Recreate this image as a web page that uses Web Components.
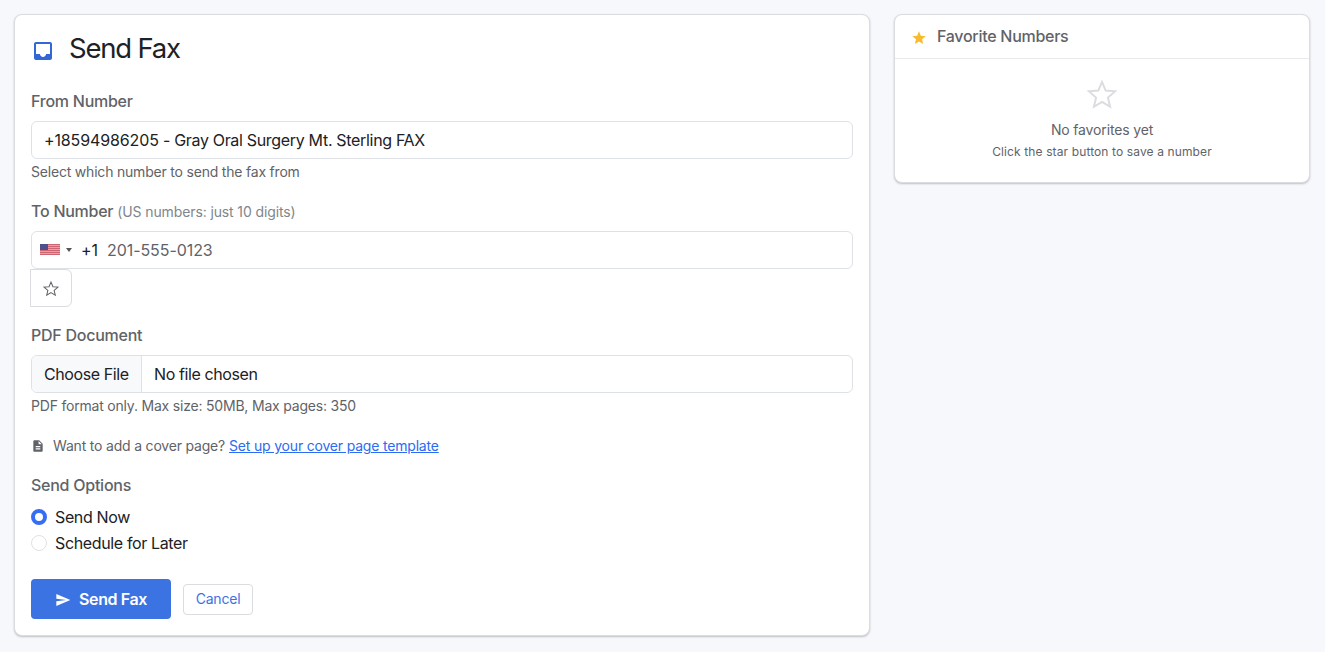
<!DOCTYPE html>
<html lang="en">
<head>
<meta charset="utf-8">
<title>Send Fax</title>
<style>
    body {
        margin: 0;
        background: #f7f8fc;
        color: #202124;
        font-family: Inter, "Liberation Sans", sans-serif;
        font-size: 16px;
        line-height: 24px;
    }
</style>
</head>
<body>
<fax-page>
    <fax-card>
        <fax-title>Send Fax</fax-title>
        <fax-field label="From Number" help="Select which number to send the fax from">
            <fax-input><b>+18594986205</b> - Gray Oral Surgery Mt. Sterling FAX</fax-input>
        </fax-field>
        <fax-field label="To Number" hint="(US numbers: just 10 digits)">
            <fax-phone code="+1" placeholder="201-555-0123"></fax-phone>
        </fax-field>
        <fax-field label="PDF Document" help="PDF format only. Max size: 50MB, Max pages: 350">
            <fax-file button="Choose File">No file chosen</fax-file>
        </fax-field>
        <fax-cover-note link="Set up your cover page template">Want to add a cover page?</fax-cover-note>
        <fax-field label="Send Options">
            <fax-radio checked>Send Now</fax-radio>
            <fax-radio>Schedule for Later</fax-radio>
        </fax-field>
        <fax-actions submit="Send Fax" cancel="Cancel"></fax-actions>
    </fax-card>
    <fax-favorites slot="side" heading="Favorite Numbers">
        <span slot="title">No favorites yet</span>
        <span slot="text">Click the star button to save a number</span>
    </fax-favorites>
</fax-page>

<script>
(() => {

    const STAR = 'M12 17.27L18.18 21l-1.64-7.03L22 9.24l-7.19-.61L12 2 9.19 8.63 2 9.24l5.46 4.73L5.82 21z';

    const define = (name, render) => {
        window.customElements.define(name, class extends HTMLElement {
            constructor() {
                super();
                this.attachShadow({mode: 'open'});
            }

            connectedCallback() {
                const template = document.createElement('template');
                template.innerHTML = render(this);
                this.shadowRoot.replaceChildren(template.content.cloneNode(true));
            }
        });
    };

    const icon = (path, size) => `<svg viewBox="0 0 24 24" width="${size}" height="${size}" fill="currentColor"><path d="${path}"/></svg>`;

    const outlineStar = (size) => `<svg viewBox="-1 -1 26 26" width="${size}" height="${size}" fill="none" stroke="currentColor" stroke-width="1.5"><path d="${STAR}"/></svg>`;

    define('fax-page', () => `
        <style>
            :host {
                display: grid;
                grid-template-columns: 856px 416px;
                gap: 24px;
                align-items: start;
                padding: 14px;
            }
        </style>
        <slot></slot>
        <slot name="side"></slot>
    `);

    define('fax-card', () => `
        <style>
            :host {
                display: block;
                box-sizing: border-box;
                height: 622px;
                padding: 16px;
                background: #fff;
                border: 1px solid #dadce0;
                border-radius: 8px;
                box-shadow: 0 1px 2px rgba(60, 64, 67, .3);
            }
        </style>
        <slot></slot>
    `);

    define('fax-title', () => `
        <style>
            :host {
                display: flex;
                align-items: center;
                height: 34px;
                margin-bottom: 24px;
                font-size: 27.5px;
                line-height: 34px;
                letter-spacing: -1.2px;
            }
            svg {
                color: #3367d6;
                margin: 6px 14px 0 0;
            }
            div {
                padding-bottom: 1px;
            }
        </style>
        ${icon('M19 3H5c-1.1 0-2 .9-2 2v14c0 1.1.9 2 2 2h14c1.1 0 2-.9 2-2V5c0-1.1-.9-2-2-2zm0 12h-4c0 1.66-1.34 3-3 3s-3-1.34-3-3H5V5h14v10z', 24)}
        <div><slot></slot></div>
    `);

    define('fax-field', (el) => `
        <style>
            :host {
                display: block;
                margin-bottom: 16px;
            }
            label {
                display: block;
                margin-bottom: 8px;
                font-weight: 500;
                letter-spacing: -.25px;
                line-height: 24px;
                height: 24px;
                color: #5f6368;
            }
            small {
                font-size: 14px;
                font-weight: 400;
                letter-spacing: -.12px;
                color: #80868b;
            }
            .help {
                margin-top: 2px;
                padding-bottom: 1px;
                font-size: 14px;
                line-height: 21px;
                letter-spacing: -.2px;
                color: #5f6368;
            }
        </style>
        <label>${el.getAttribute('label')}${el.hasAttribute('hint') ? ` <small>${el.getAttribute('hint')}</small>` : ''}</label>
        <slot></slot>
        ${el.hasAttribute('help') ? `<div class="help">${el.getAttribute('help')}</div>` : ''}
    `);

    define('fax-input', () => `
        <style>
            :host {
                display: block;
                box-sizing: border-box;
                height: 38px;
                padding: 6px 12px;
                border: 1px solid #dee2e6;
                border-radius: 6px;
                letter-spacing: -.32px;
            }
            ::slotted(b) {
                font-weight: 400;
                letter-spacing: -.13px;
            }
        </style>
        <slot></slot>
    `);

    define('fax-phone', (el) => `
        <style>
            :host {
                display: block;
            }
            .field {
                display: flex;
                align-items: center;
                box-sizing: border-box;
                height: 38px;
                padding-left: 8px;
                border: 1px solid #dee2e6;
                border-radius: 6px;
            }
            .field svg {
                margin-bottom: 1px;
            }
            .arrow {
                margin: 0 9px 0 6px;
                border: 3px solid transparent;
                border-top: 4px solid #555;
                border-bottom: 0;
            }
            .code {
                width: 26px;
                letter-spacing: -.2px;
            }
            .number {
                color: #5f6368;
                letter-spacing: -.07px;
            }
            button {
                display: flex;
                align-items: center;
                justify-content: center;
                width: 42px;
                height: 38px;
                margin: 0 0 0 -1px;
                padding: 0;
                background: #fff;
                border: 1px solid #dadce0;
                border-radius: 0 6px 6px 0;
                color: #5f6368;
            }
            button svg {
                margin-top: 2px;
            }
        </style>
        <div class="field">
            <svg width="20" height="11" viewBox="0 0 20 11">
                <rect width="20" height="11" fill="#e3a0a9"/>
                <path d="M0 .5h20M0 2.5h20M0 4.5h20M0 6.5h20M0 8.5h20M0 10.5h20" stroke="#cd6673"/>
                <rect width="8" height="6" fill="#50508a"/>
            </svg>
            <span class="arrow"></span>
            <span class="code">${el.getAttribute('code')}</span>
            <span class="number">${el.getAttribute('placeholder')}</span>
        </div>
        <button aria-label="Save number">${outlineStar(18)}</button>
    `);

    define('fax-file', (el) => `
        <style>
            :host {
                display: flex;
                box-sizing: border-box;
                height: 38px;
                border: 1px solid #dee2e6;
                border-radius: 6px;
                overflow: hidden;
                letter-spacing: -.4px;
            }
            span {
                box-sizing: border-box;
                width: 110px;
                margin-right: 12px;
                padding: 6px 0 6px 12px;
                background: #f8f9fa;
                border-right: 1px solid #dee2e6;
            }
            div {
                padding: 6px 0;
            }
        </style>
        <span>${el.getAttribute('button')}</span>
        <div><slot></slot></div>
    `);

    define('fax-cover-note', (el) => `
        <style>
            :host {
                display: flex;
                align-items: center;
                height: 21px;
                margin: 18px 0 17px;
                font-size: 14px;
                line-height: 21px;
                letter-spacing: -.19px;
                color: #5f6368;
            }
            svg {
                margin: 1px 8px 0 0;
            }
            a {
                margin-left: 4px;
                color: #2c6bf2;
                text-decoration: underline;
            }
        </style>
        ${icon('M14 2H6c-1.1 0-1.99.9-1.99 2L4 20c0 1.1.89 2 1.99 2H18c1.1 0 2-.9 2-2V8l-6-6zm2 16H8v-2h8v2zm0-4H8v-2h8v2zm-3-5V3.5L18.5 9H13z', 14)}
        <slot></slot>
        <a>${el.getAttribute('link')}</a>
    `);

    define('fax-radio', (el) => `
        <style>
            :host {
                display: flex;
                align-items: center;
                height: 24px;
                margin-bottom: 2px;
                letter-spacing: -.36px;
            }
            i {
                box-sizing: border-box;
                width: 16px;
                height: 16px;
                margin-right: 8px;
                border: 1px solid #dee2e6;
                border-radius: 50%;
            }
            :host([checked]) i {
                border: 4px solid #356df5;
            }
        </style>
        <i></i><slot></slot>
    `);

    define('fax-actions', (el) => `
        <style>
            :host {
                display: flex;
                align-items: center;
                gap: 12px;
                margin-top: 24px;
            }
            button {
                display: flex;
                align-items: center;
                justify-content: center;
                box-sizing: border-box;
                margin: 0;
                padding: 0;
                font: inherit;
                border-radius: 4px;
            }
            .submit {
                width: 140px;
                height: 40px;
                gap: 8px;
                background: #3b73e3;
                border: 0;
                color: #fff;
                font-weight: 600;
                letter-spacing: -.4px;
            }
            .submit svg {
                margin-top: 2px;
            }
            .cancel {
                width: 70px;
                height: 31px;
                background: #fff;
                border: 1px solid #dadce0;
                color: #3b73e3;
                font-size: 14px;
                letter-spacing: -.2px;
            }
        </style>
        <button class="submit">${icon('M2.01 21L23 12 2.01 3 2 10l15 2-15 2z', 16)}${el.getAttribute('submit')}</button>
        <button class="cancel">${el.getAttribute('cancel')}</button>
    `);

    define('fax-favorites', (el) => `
        <style>
            :host {
                display: block;
                box-sizing: border-box;
                height: 169px;
                background: #fff;
                border: 1px solid #dadce0;
                border-radius: 8px;
                box-shadow: 0 1px 2px rgba(60, 64, 67, .3);
                text-align: center;
                color: #5f6368;
            }
            header {
                display: flex;
                align-items: center;
                box-sizing: border-box;
                height: 44px;
                padding: 0 0 2px 16px;
                border-bottom: 1px solid #e8eaed;
                font-weight: 500;
                letter-spacing: -.28px;
            }
            header svg {
                margin: 4px 10px 0 0;
                color: #f9bb2d;
            }
            main {
                display: flex;
                flex-direction: column;
                align-items: center;
                padding-top: 19px;
            }
            main svg {
                color: #dadce0;
            }
            .title {
                margin-top: 7px;
                font-size: 14px;
                line-height: 21px;
                letter-spacing: -.15px;
            }
            .text {
                font-size: 12px;
                line-height: 24px;
                letter-spacing: .12px;
            }
        </style>
        <header>${icon(STAR, 16)}${el.getAttribute('heading')}</header>
        <main>
            ${outlineStar(34)}
            <div class="title"><slot name="title"></slot></div>
            <div class="text"><slot name="text"></slot></div>
        </main>
    `);

})();
</script>
</body>
</html>
